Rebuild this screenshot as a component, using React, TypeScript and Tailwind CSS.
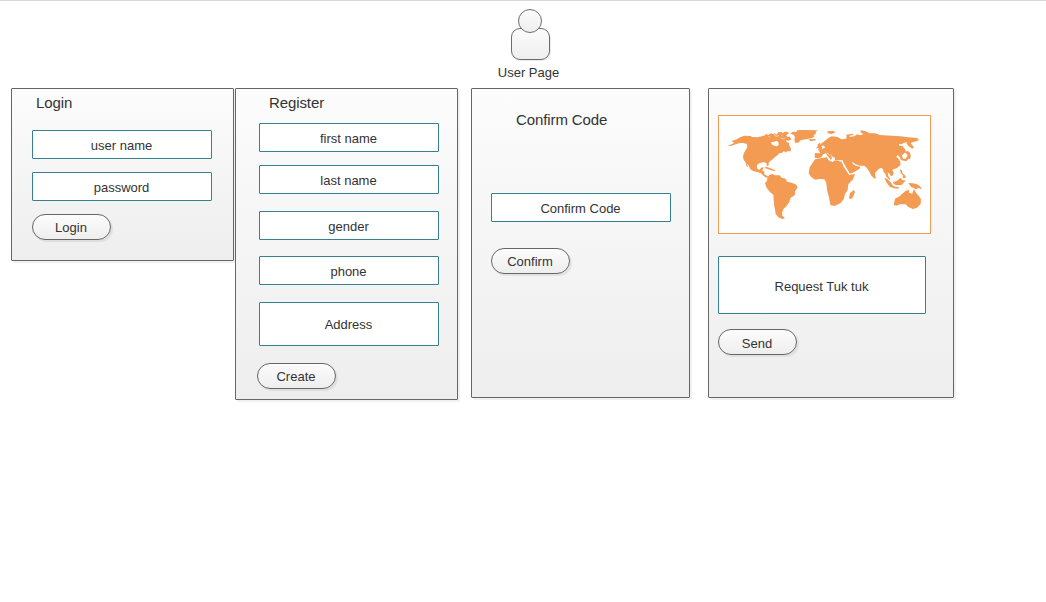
import type { ReactNode } from "react";

function Panel({ className, children }: { className: string; children: ReactNode }) {
  return (
    <section
      className={`flex shrink-0 flex-col items-start rounded-[1px] border border-[#666666] bg-linear-to-b from-[#fcfcfc] to-[#eeeeee] shadow-[2px_2px_1px_rgba(0,0,0,0.06)] ${className}`}
    >
      {children}
    </section>
  );
}

function Title({ className, children }: { className: string; children: ReactNode }) {
  return (
    <h2 className={`text-[15px] leading-[18px] tracking-[-0.1px] whitespace-nowrap ${className}`}>{children}</h2>
  );
}

function Field({ className, children }: { className: string; children: ReactNode }) {
  return (
    <div
      className={`flex shrink-0 items-center justify-center rounded-[1px] border border-[#36818f] bg-white pt-0.5 pr-px text-[13px] leading-4 ${className}`}
    >
      {children}
    </div>
  );
}

function Button({ className, children }: { className: string; children: ReactNode }) {
  return (
    <button
      className={`flex h-[26px] w-[79px] shrink-0 items-center justify-center rounded-full border border-[#666666] bg-linear-to-b from-[#fcfcfc] to-[#eeeeee] pr-px text-[13px] leading-4 shadow-[2px_2px_1px_rgba(0,0,0,0.07)] ${className}`}
    >
      {children}
    </button>
  );
}

function Person() {
  return (
    <svg className="h-[56px] w-[44px]" viewBox="0 0 44 56" fill="none">
      <defs>
        <linearGradient id="skin" x1="0" y1="0" x2="0" y2="1">
          <stop offset="0" stopColor="#fcfcfc" />
          <stop offset="1" stopColor="#eeeeee" />
        </linearGradient>
      </defs>
      <rect x="5" y="23" width="38" height="31" rx="9" fill="#000" opacity="0.08" />
      <rect x="3.5" y="21.5" width="38" height="31" rx="8.5" fill="url(#skin)" stroke="#6c6c6c" />
      <circle cx="22" cy="14" r="11.5" fill="url(#skin)" stroke="#6c6c6c" />
    </svg>
  );
}

function WorldMap() {
  return (
    <svg className="h-[117px] w-[211px]" viewBox="12 18 633 351" fill="#f39a53">
      {/* North America */}
      <path
        fillRule="evenodd"
        d="M36 109L50 103L58 98L52 95L51 92L62 89L76 82L88 77L108 78L110 81L128 82L140 79L150 76L153 71L160 75L168 70L174 73L180 69L183 75L190 67L200 66L203 70L208 65L216 65L222 70L214 76L216 80L224 80L229 88L222 92L212 91L216 97L223 98L222 104L228 116L227 124L216 124L212 128L207 123L200 130L194 128L188 135L180 141L174 147L166 153L161 158L161 166L156 168L154 159L146 156L136 159L128 162L125 170L128 178L134 179L138 173L146 172L142 182L149 185L147 192L153 196L160 200L156 204L147 199L138 190L128 186L116 184L106 178L102 168L96 161L99 172L94 168L92 157L86 150L84 140L87 128L92 120L97 112L96 102L84 99L74 99L64 102L50 107ZM168 97L178 95L184 92L190 96L191 105L186 109L178 107L170 103Z"
      />
      <path d="M226 71L233 65L244 66L246 61L262 60L308 61L302 66L303 71L296 75L298 80L290 84L274 88L258 90L250 98L240 98L238 88L240 82L236 74ZM281 88L300 87L303 91L286 94ZM147 173L155 171L165 174L173 178L181 180L181 183L168 181L156 176Z" />
      {/* Channels between the Arctic islands */}
      <path d="M177 74L183 79L192 77M196 84L204 87L210 84M198 74L203 79M160 79L166 82" fill="none" stroke="#fff" strokeWidth="1.6" />
      {/* South America */}
      <path d="M158 201L164 194L172 192L180 196L194 196L200 203L212 206L216 215L230 218L244 224L248 232L241 242L239 256L227 263L223 276L214 289L206 296L201 308L202 317L210 325L202 327L190 322L182 312L180 298L178 290L176 270L175 254L164 245L154 232L150 220L156 212Z" />
      {/* Africa and Madagascar */}
      <path d="M294 157L300 148L316 145L336 142L340 150L352 156L360 151L380 155L386 170L394 182L402 195L420 192L414 208L400 223L398 240L390 252L386 268L376 280L358 288L346 285L342 262L336 240L334 218L328 208L312 207L300 209L288 200L281 190L284 172ZM402 264L405 250L416 240L420 246L414 262L407 268Z" />
      {/* Europe and Asia */}
      <path d="M299 143L300 129L314 130L315 126L309 122L321 118L331 112L326 107L318 107L318 101L330 92L340 84L350 79L368 81L379 88L394 86L395 78L393 74L414 71L416 74L404 77L404 81L418 79L426 73L436 76L445 73L436 66L438 61L452 64L464 70L480 70L495 75L530 77L556 79L580 82L606 84L612 90L604 94L592 97L587 100L597 112L592 116L580 108L574 100L577 96L568 98L560 102L552 102L553 107L563 108L570 118L573 124L566 132L560 136L563 143L564 151L558 150L554 141L548 135L544 140L552 148L556 156L556 166L546 174L538 177L532 180L536 188L534 196L528 199L522 190L518 188L520 199L526 206L524 210L514 200L510 190L506 187L504 177L498 173L490 178L481 188L480 194L483 204L479 206L470 198L462 184L456 174L448 167L434 167L422 163L411 155L413 161L422 167L436 170L434 176L418 186L405 191L396 176L384 155L383 151L370 151L360 150L360 143L353 141L346 132L351 145L348 150L344 145L338 138L333 130L324 133L320 141L310 145Z" />
      <path d="M303 115L308 109L308 103L315 98L318 105L322 114L320 119L308 120L312 114ZM337 64L357 63L360 68L350 72L338 70ZM576 122L584 127L587 135L586 146L579 148L574 154L561 151L558 146L571 146L578 138L576 132L569 128Z" />
      {/* South-east Asia and Australia */}
      <path d="M508 203L517 207L527 217L535 229L552 232L550 236L536 235L524 230L514 217ZM534 216L546 213L556 203L562 210L573 212L567 217L560 225L546 226L536 222ZM555 178L561 181L562 189L571 197L572 204L563 204L564 196L557 190ZM580 219L593 220L606 223L615 229L621 238L610 234L602 238L596 234L588 231ZM536 284L540 266L552 260L562 251L572 242L582 240L582 248L592 251L596 237L603 248L611 257L618 268L617 282L606 293L594 297L580 291L572 283L556 283L544 287Z" />
      {/* Inland seas */}
      <path d="M336 129L345 136M351 141L358 145" fill="none" stroke="#fff" strokeWidth="1.8" />
    </svg>
  );
}

export default function App() {
  return (
    <main className="h-[602px] w-[1046px] overflow-hidden border-t border-[#dadada] bg-white font-['Liberation_Sans',Arial,sans-serif] text-[#333333]">
      <header className="flex h-[87px] flex-col items-center pt-[6px] pl-[14px]">
        <Person />
        <p className="mt-[2px] -ml-[3px] text-[13px] leading-4">User Page</p>
      </header>

      <div className="flex items-start pl-[11px]">
        <Panel className="h-[173px] w-[223px] pl-5">
          <Title className="mt-[5px] ml-1">Login</Title>
          <Field className="mt-[18px] h-[29px] w-[180px]">user name</Field>
          <Field className="mt-[13px] h-[29px] w-[180px]">password</Field>
          <Button className="mt-[13px] pt-0.5">Login</Button>
        </Panel>

        <Panel className="ml-px h-[312px] w-[223px] pl-[23px]">
          <Title className="mt-[5px] ml-[10px]">Register</Title>
          <Field className="mt-[11px] h-[29px] w-[180px]">first name</Field>
          <Field className="mt-[13px] h-[29px] w-[180px]">last name</Field>
          <Field className="mt-[17px] h-[29px] w-[180px]">gender</Field>
          <Field className="mt-4 h-[29px] w-[180px]">phone</Field>
          <Field className="mt-[17px] h-[44px] w-[180px]">Address</Field>
          <Button className="mt-[17px] -ml-[2px] pt-0.5">Create</Button>
        </Panel>

        <Panel className="ml-[13px] h-[310px] w-[219px] pl-[19px]">
          <Title className="mt-[22px] ml-[25px]">Confirm Code</Title>
          <Field className="mt-[64px] h-[29px] w-[180px]">Confirm Code</Field>
          <Button className="mt-[26px] pt-0.5">Confirm</Button>
        </Panel>

        <Panel className="ml-[18px] h-[310px] w-[246px] pl-[9px]">
          <div className="mt-[26px] h-[119px] w-[213px] shrink-0 border border-[#f39a53] bg-white">
            <WorldMap />
          </div>
          <Field className="mt-[22px] h-[58px] w-[208px]">
            <span className="pt-0.5">Request Tuk tuk</span>
          </Field>
          <Button className="mt-[15px] pt-1">Send</Button>
        </Panel>
      </div>
    </main>
  );
}
